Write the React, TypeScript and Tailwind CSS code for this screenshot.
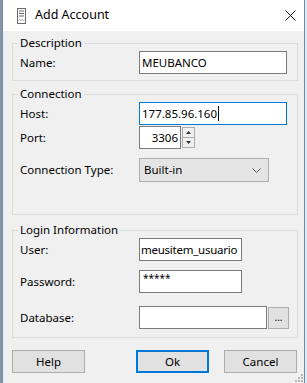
import React from "react";

const font = { fontFamily: '"Noto Sans", "Open Sans", Arial, sans-serif' };

function TextBox({ value, width, focused, tight }: { value?: string; width: string; focused?: boolean; tight?: boolean }) {
  return (
    <div
      className={`${width} h-[23px] bg-white border flex items-center text-[11.5px] text-black overflow-hidden whitespace-nowrap ${
        tight ? "pl-[1px] tracking-[-0.25px]" : "px-[2px]"
      } ${focused ? "border-[#0078d7]" : "border-[#7a7a7a]"}`}
    >
      <span>{value}</span>
      {focused && <span className="w-px h-[15px] bg-black ml-[1px] shrink-0" />}
    </div>
  );
}

function Row({ label, className = "", children }: { label: string; className?: string; children: React.ReactNode }) {
  return (
    <div className={`flex items-center ${className}`}>
      <div className="w-[119px] text-[11.5px] text-black">{label}</div>
      {children}
    </div>
  );
}

function Group({ title, className = "", children }: { title: string; className?: string; children: React.ReactNode }) {
  return (
    <fieldset className={`w-[286px] ml-[9px] border border-[#dcdcdc] px-[7px] ${className}`}>
      <legend className="-ml-[2px] px-[2px] text-[11.5px] leading-[16px] text-black">{title}</legend>
      {children}
    </fieldset>
  );
}

function Button({ label, primary }: { label: string; primary?: boolean }) {
  return (
    <div
      className={`w-[73px] h-[23px] flex items-center justify-center bg-[#e1e1e1] text-[11.5px] text-black ${
        primary ? "border-2 border-[#0078d7]" : "border border-[#adadad]"
      }`}
    >
      {label}
    </div>
  );
}

export default function App() {
  return (
    <div className="w-[307px] h-[383px] flex bg-[#8c949b] overflow-hidden" style={font}>
      <div className="w-[2px]" />
      <div className="w-[303px] flex flex-col border-x border-[#5d8fbf] bg-[#f0f0f0]">
        <div className="h-[31px] bg-white flex items-center shrink-0">
          <svg width="9" height="16" viewBox="0 0 9 16" className="ml-[14px]">
            <rect x="0.5" y="0.5" width="8" height="15" fill="#fff" stroke="#6b6b6b" />
            <line x1="2" y1="3" x2="7" y2="3" stroke="#6b6b6b" />
            <line x1="2" y1="5.5" x2="7" y2="5.5" stroke="#6b6b6b" />
            <line x1="2" y1="8" x2="7" y2="8" stroke="#6b6b6b" />
            <path d="M1.5 12.5 l1.2 -1 l1.2 1 l1.2 -1 l1.2 1 l1.2 -1" fill="none" stroke="#8a8a8a" strokeWidth="0.8" />
          </svg>
          <span className="ml-[9px] text-[12.5px] text-black">Add Account</span>
          <svg width="11" height="11" viewBox="0 0 11 11" className="ml-auto mr-[8px]">
            <path d="M0.5 0.5 L10.5 10.5 M10.5 0.5 L0.5 10.5" stroke="#111" strokeWidth="1" />
          </svg>
        </div>

        <Group title="Description" className="mt-[4px] pb-[6px]">
          <Row label="Name:">
            <TextBox value="MEUBANCO" width="w-[148px]" />
          </Row>
        </Group>

        <Group title="Connection" className="mt-[5px] pb-[32px]">
          <Row label="Host:">
            <TextBox value="177.85.96.160" width="w-[148px]" focused />
          </Row>
          <Row label="Port:" className="mt-[1px]">
            <div className="w-[42px] h-[23px] bg-white border border-[#7a7a7a] flex items-center justify-end pr-[2px] text-[11.5px] text-black">
              3306
            </div>
            <div className="ml-[1px] w-[13px] h-[23px] flex flex-col">
              <div className="h-[11px] mt-[1px] border border-[#adadad] bg-[#f0f0f0] flex items-center justify-center">
                <svg width="5" height="3" viewBox="0 0 5 3">
                  <path d="M0 3 L2.5 0 L5 3 Z" fill="#333" />
                </svg>
              </div>
              <div className="h-[10px] border border-t-0 border-[#adadad] bg-[#f0f0f0] flex items-center justify-center">
                <svg width="5" height="3" viewBox="0 0 5 3">
                  <path d="M0 0 L2.5 3 L5 0 Z" fill="#333" />
                </svg>
              </div>
            </div>
          </Row>
          <Row label="Connection Type:" className="mt-[9px]">
            <div className="w-[130px] h-[24px] bg-[#e5e5e5] border border-[#adadad] flex items-center pl-[4px] pr-[7px] text-[11.5px] text-black">
              <span>Built-in</span>
              <svg width="9" height="5" viewBox="0 0 9 5" className="ml-auto">
                <path d="M0.5 0.5 L4.5 4.5 L8.5 0.5" fill="none" stroke="#555" strokeWidth="1" />
              </svg>
            </div>
          </Row>
        </Group>

        <Group title="Login Information" className="mt-[7px] pb-[8px]">
          <Row label="User:">
            <TextBox value="meusitem_usuario" width="w-[103px]" tight />
          </Row>
          <Row label="Password:" className="mt-[9px]">
            <div className="w-[103px] h-[23px] bg-white border border-[#7a7a7a] px-[3px] text-[10px] leading-[14px] text-black">
              *****
            </div>
          </Row>
          <Row label="Database:" className="mt-[13px]">
            <div className="w-[128px] h-[23px] bg-white border border-[#7a7a7a]" />
            <div className="ml-[1px] w-[21px] h-[22px] bg-[#e1e1e1] border border-[#adadad] flex items-center justify-center text-[10px] leading-none text-black pb-[2px]">
              ...
            </div>
          </Row>
        </Group>

        <div className="mt-[12px] ml-[9px] flex">
          <Button label="Help" />
          <div className="ml-[51px]">
            <Button label="Ok" primary />
          </div>
          <div className="ml-[15px]">
            <Button label="Cancel" />
          </div>
        </div>

        <div className="mt-auto mb-[1px] mr-[1px] self-end grid grid-cols-3 gap-[1px]">
          <span />
          <span />
          <span className="w-[2px] h-[2px] bg-[#b8b8b8]" />
          <span />
          <span className="w-[2px] h-[2px] bg-[#b8b8b8]" />
          <span className="w-[2px] h-[2px] bg-[#b8b8b8]" />
          <span className="w-[2px] h-[2px] bg-[#b8b8b8]" />
          <span className="w-[2px] h-[2px] bg-[#b8b8b8]" />
          <span className="w-[2px] h-[2px] bg-[#b8b8b8]" />
        </div>
      </div>
      <div className="flex-1 bg-[#e9e9e9]" />
    </div>
  );
}
